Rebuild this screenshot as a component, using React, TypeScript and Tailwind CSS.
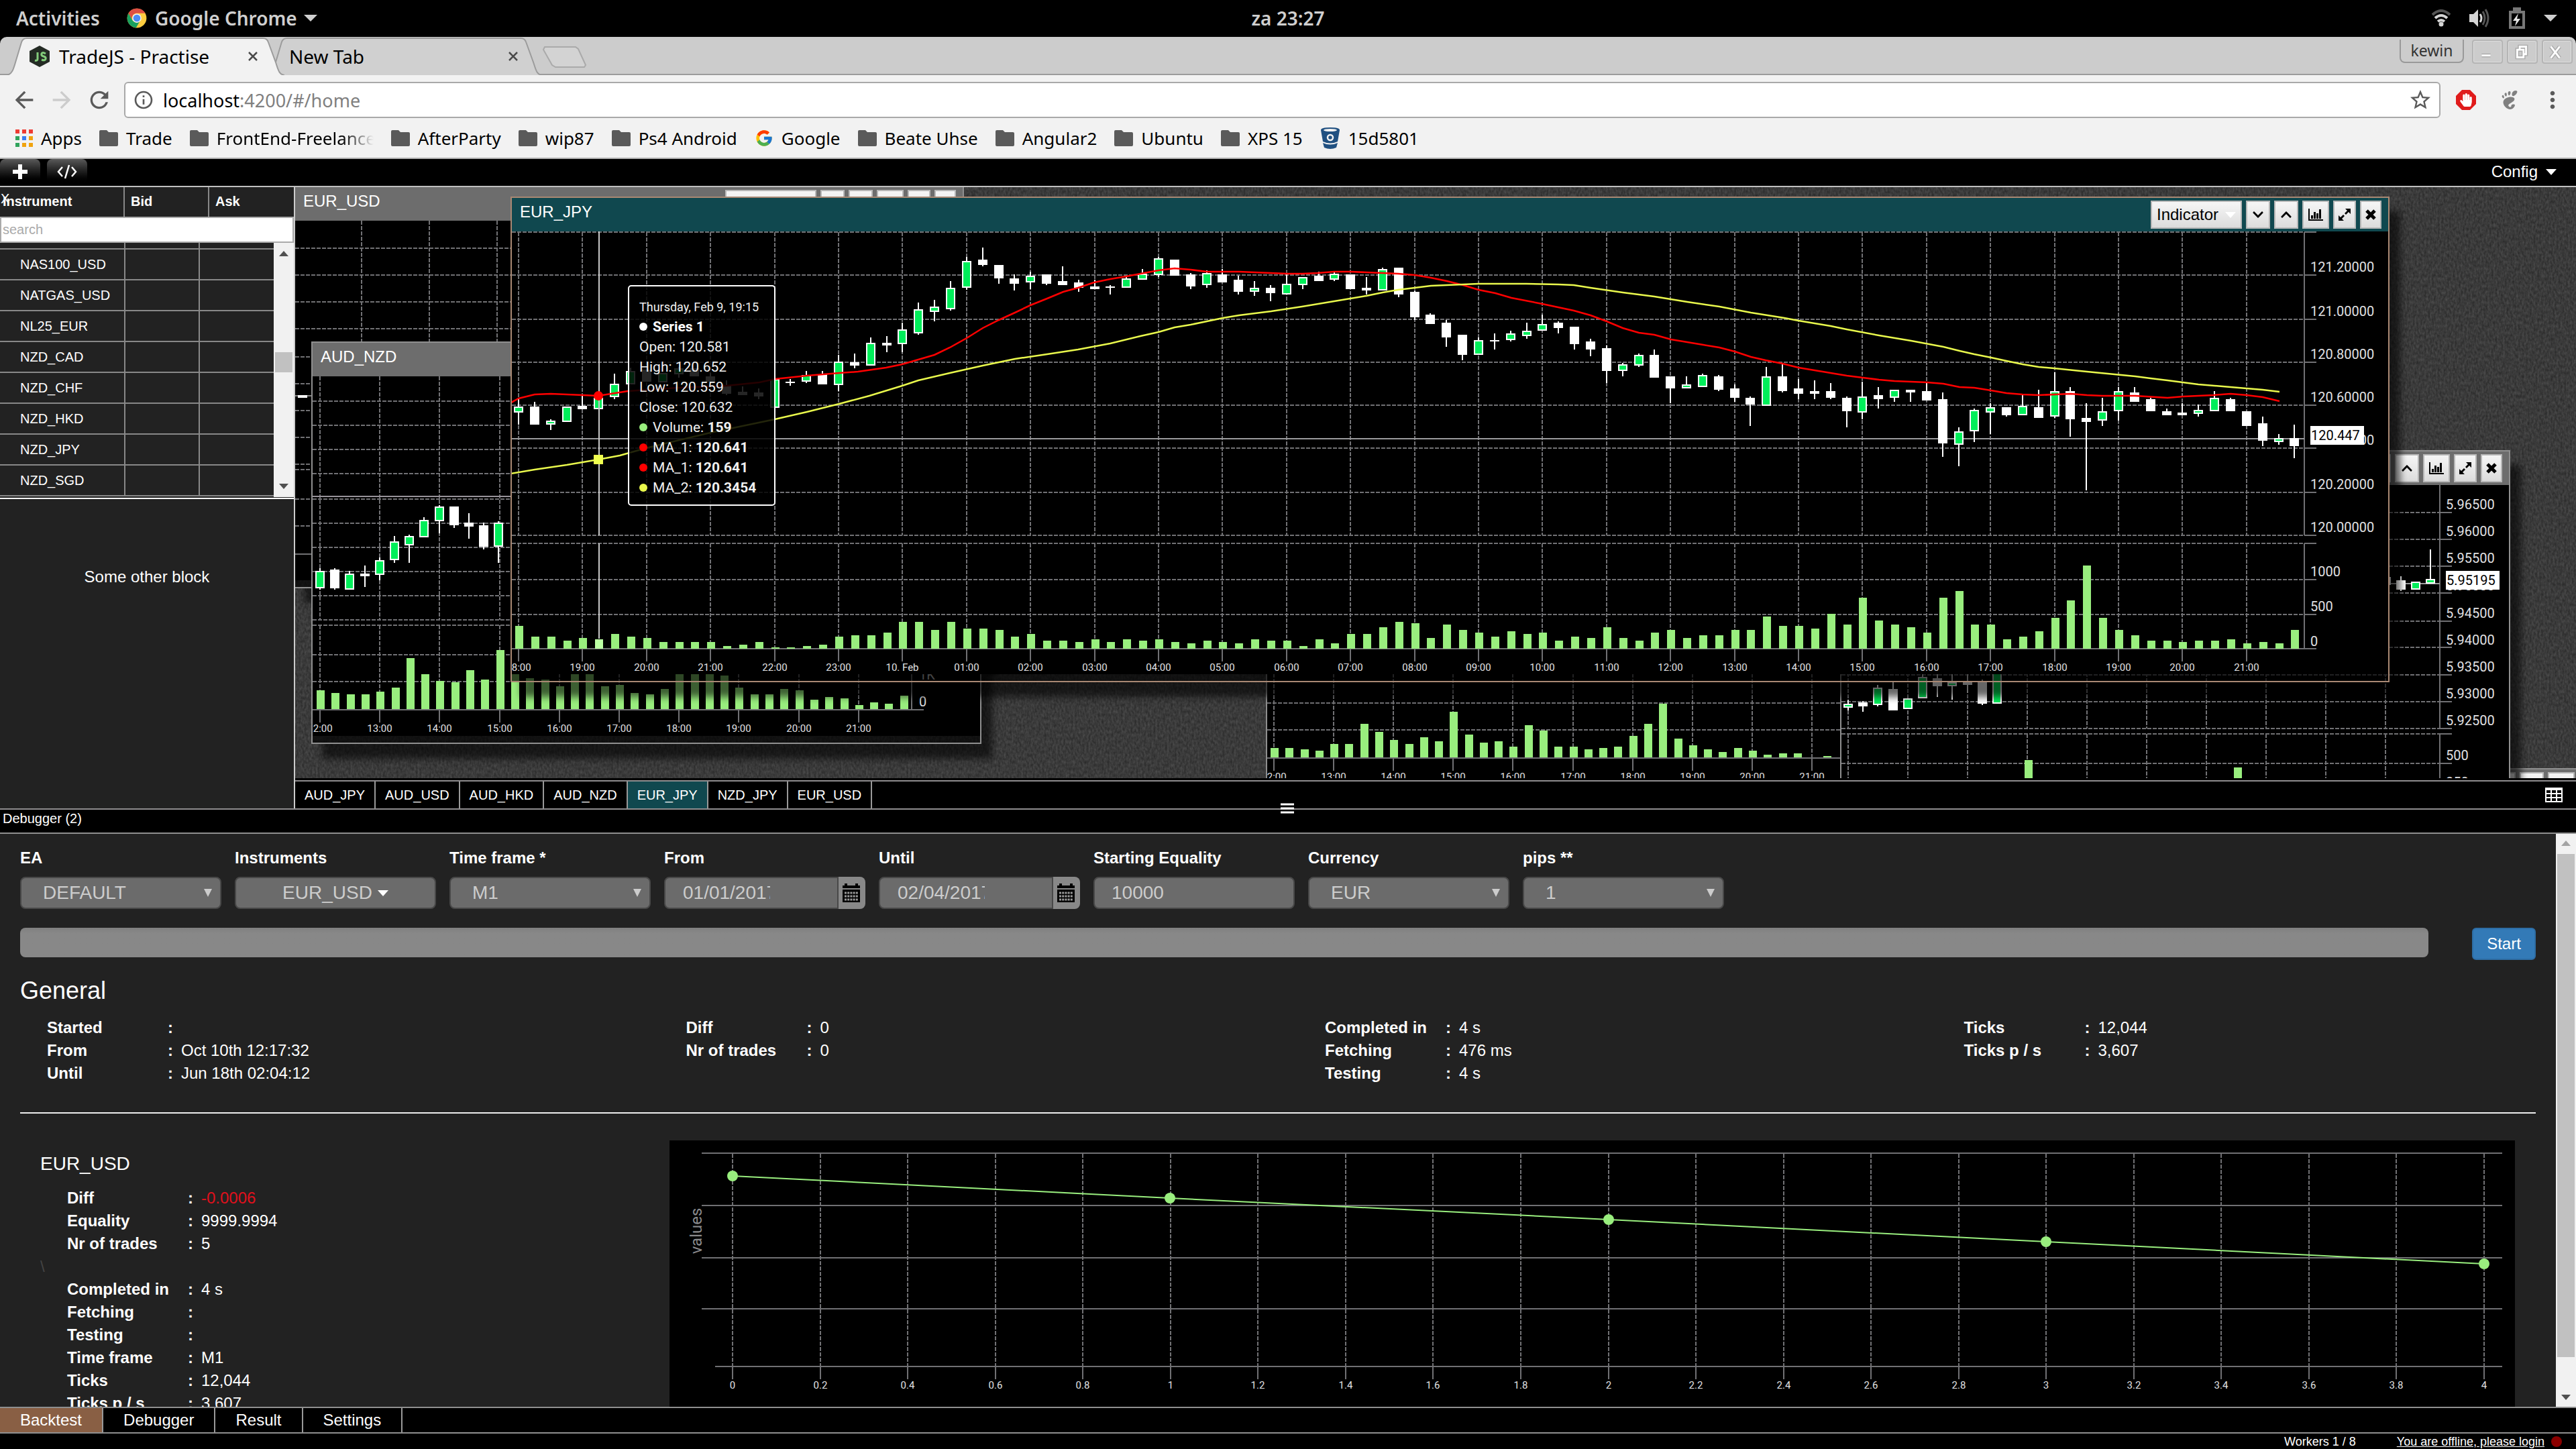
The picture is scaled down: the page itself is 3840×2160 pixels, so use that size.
import React from "react";
import { FcGoogle } from "react-icons/fc";
import { FaHandPaper, FaChevronDown, FaChevronUp, FaCode } from "react-icons/fa";
import { MdArrowBack, MdArrowForward, MdRefresh, MdInfoOutline, MdMoreVert, MdStarBorder } from "react-icons/md";
import { SiGnome } from "react-icons/si";

/* ---------- data ---------- */

// [high, body top, body bottom, low, rising] in chart pixels
type Candle = [number, number, number, number, 0 | 1];
type Point = [number, number];

const eurJpyCandles: Candle[] = [
  [594, 606, 615, 633, 1], [599, 606, 633, 633, 0], [625, 627, 633, 641, 1], [606, 606, 629, 629, 1],
  [589, 605, 610, 610, 0], [593, 593, 610, 610, 1], [557, 572, 592, 595, 1], [548, 553, 573, 573, 1],
  [551, 551, 569, 569, 0], [556, 556, 570, 570, 1], [547, 549, 558, 563, 1], [549, 549, 561, 561, 0],
  [556, 561, 569, 569, 0], [567, 575, 587, 589, 0], [576, 584, 589, 589, 0], [579, 585, 591, 595, 0],
  [565, 565, 608, 608, 1], [565, 569, 571, 575, 0], [553, 559, 569, 571, 1], [553, 558, 573, 573, 0],
  [529, 539, 574, 583, 1], [527, 540, 545, 549, 0], [503, 511, 545, 545, 1], [501, 511, 515, 525, 0],
  [481, 491, 513, 525, 1], [451, 461, 497, 499, 1], [447, 457, 465, 479, 1], [419, 429, 461, 463, 1],
  [383, 389, 429, 432, 1], [369, 387, 395, 397, 0], [395, 395, 415, 423, 0], [409, 415, 423, 433, 0],
  [405, 411, 421, 431, 1], [409, 409, 423, 425, 0], [397, 419, 425, 425, 0], [417, 421, 429, 435, 0],
  [417, 427, 431, 431, 0], [425, 427, 429, 439, 0], [413, 415, 429, 429, 1], [401, 408, 417, 417, 1],
  [383, 385, 410, 413, 1], [387, 387, 411, 411, 0], [407, 409, 427, 431, 0], [403, 407, 425, 429, 1],
  [401, 409, 421, 421, 0], [411, 417, 435, 439, 0], [419, 429, 435, 441, 1], [425, 429, 437, 449, 0],
  [409, 423, 439, 439, 1], [413, 413, 425, 431, 1], [405, 411, 419, 419, 0], [405, 408, 417, 419, 1],
  [409, 409, 431, 431, 0], [413, 429, 433, 439, 0], [399, 401, 433, 433, 1], [399, 399, 439, 443, 0],
  [433, 435, 473, 477, 0], [467, 469, 483, 483, 0], [477, 481, 503, 517, 0], [499, 499, 529, 537, 0],
  [503, 507, 529, 529, 1], [497, 507, 509, 521, 0], [493, 497, 507, 509, 1], [481, 493, 501, 505, 1],
  [469, 483, 493, 493, 1], [479, 481, 489, 497, 0], [487, 487, 513, 521, 0], [505, 509, 521, 531, 0],
  [515, 519, 553, 571, 0], [541, 543, 553, 561, 1], [527, 529, 545, 547, 1], [521, 529, 563, 563, 0],
  [561, 561, 579, 601, 0], [561, 573, 579, 579, 1], [557, 559, 577, 577, 1], [559, 561, 581, 583, 0],
  [573, 579, 593, 599, 0], [591, 593, 603, 635, 0], [547, 561, 605, 605, 1], [543, 561, 583, 585, 0],
  [565, 579, 587, 595, 0], [567, 583, 587, 595, 0], [571, 583, 593, 595, 0], [591, 593, 613, 637, 0],
  [569, 591, 615, 625, 1], [577, 589, 595, 609, 0], [581, 581, 593, 599, 1], [581, 581, 585, 599, 0],
  [571, 583, 597, 597, 0], [585, 595, 661, 681, 0], [637, 643, 663, 695, 1], [609, 611, 643, 659, 1],
  [601, 607, 615, 647, 1], [607, 607, 619, 621, 0], [589, 605, 619, 619, 1], [581, 607, 623, 623, 0],
  [555, 583, 621, 623, 1], [577, 583, 625, 651, 0], [601, 623, 629, 731, 0], [593, 613, 627, 635, 1],
  [577, 583, 613, 627, 1], [577, 585, 599, 599, 0], [593, 595, 613, 613, 0], [609, 613, 619, 619, 0],
  [601, 615, 619, 619, 0], [603, 611, 617, 621, 1], [583, 593, 613, 613, 1], [593, 595, 613, 613, 0],
  [613, 613, 635, 635, 0], [621, 631, 657, 665, 0], [647, 653, 659, 663, 1], [633, 653, 665, 683, 0],
];

const eurJpyVolume = [
  933, 949, 949, 955, 951, 953, 945, 949, 951, 957, 957, 957, 957, 963, 961, 957, 965, 965, 963, 961, 949, 947, 947,
  943, 927, 927, 939, 927, 937, 937, 939, 949, 945, 955, 955, 957, 953, 957, 953, 955, 953, 957, 959, 955, 957, 959,
  953, 955, 955, 963, 953, 959, 945, 945, 935, 927, 929, 951, 931, 939, 943, 949, 941, 945, 943, 955, 949, 951, 935,
  951, 955, 943, 939, 951, 947, 947, 939, 939, 919, 933, 933, 937, 915, 931, 891, 925, 931, 935, 943, 891, 881, 931,
  931, 953, 949, 941, 921, 895, 843, 921, 939, 947, 955, 955, 957, 955, 955, 953, 959, 957, 959, 939,
];

const ma1: Point[] = [
  [762, 600], [773, 594], [797, 588], [821, 587], [845, 588], [869, 589], [892, 590], [917, 586], [936, 583],
  [1010, 578], [1083, 575], [1132, 570], [1155, 565], [1203, 560], [1251, 556], [1279, 554], [1321, 548], [1345, 543],
  [1369, 536], [1393, 529], [1416, 518], [1441, 504], [1465, 489], [1489, 477], [1513, 466], [1536, 455], [1561, 445],
  [1585, 435], [1607, 429], [1631, 421], [1655, 416], [1679, 412], [1700, 408], [1727, 403], [1751, 400], [1775, 402],
  [1799, 405], [1847, 405], [1895, 407], [1919, 408], [1941, 408], [1964, 407], [1989, 405], [2013, 405], [2037, 406],
  [2061, 407], [2084, 408], [2109, 410], [2133, 414], [2157, 419], [2181, 425], [2204, 432], [2229, 437], [2253, 444],
  [2299, 453], [2346, 463], [2371, 470], [2395, 479], [2419, 489], [2443, 496], [2466, 499], [2491, 506], [2515, 510],
  [2539, 514], [2563, 518], [2586, 524], [2610, 532], [2632, 537], [2657, 542], [2681, 548], [2705, 552], [2729, 556],
  [2753, 560], [2777, 563], [2801, 566], [2824, 568], [2873, 570], [2897, 572], [2921, 577], [2943, 578], [2968, 582],
  [2991, 586], [3015, 588], [3039, 589], [3087, 587], [3111, 589], [3134, 590], [3183, 590], [3231, 593], [3255, 591],
  [3277, 590], [3300, 589], [3325, 587], [3349, 589], [3373, 592], [3398, 598],
];

const ma2: Point[] = [
  [762, 706], [797, 700], [845, 693], [892, 685], [924, 679], [963, 668], [1059, 645], [1155, 625], [1203, 614],
  [1251, 602], [1296, 590], [1345, 575], [1369, 567], [1416, 556], [1465, 545], [1513, 535], [1561, 528], [1607, 521],
  [1655, 512], [1700, 501], [1727, 495], [1751, 488], [1775, 484], [1799, 479], [1823, 474], [1847, 470], [1895, 464],
  [1941, 457], [1989, 449], [2037, 441], [2061, 436], [2084, 432], [2109, 429], [2133, 426], [2157, 425], [2204, 423],
  [2275, 423], [2323, 424], [2346, 425], [2371, 429], [2419, 436], [2466, 442], [2515, 450], [2563, 457], [2610, 466],
  [2660, 474], [2681, 478], [2729, 486], [2753, 491], [2801, 500], [2849, 508], [2897, 517], [2921, 523], [2943, 528],
  [2968, 533], [2991, 538], [3015, 543], [3039, 547], [3062, 549], [3111, 554], [3183, 561], [3206, 564], [3231, 567],
  [3277, 573], [3325, 577], [3349, 579], [3373, 581], [3398, 584],
];

const audNzdCandles: Candle[] = [
  [847, 851, 877, 879, 1], [847, 849, 877, 879, 0], [851, 855, 879, 879, 1], [843, 855, 859, 875, 0],
  [831, 835, 857, 865, 1], [799, 807, 835, 839, 1], [797, 799, 813, 839, 1], [771, 775, 801, 801, 1],
  [753, 755, 777, 795, 1], [755, 755, 783, 787, 0], [765, 779, 785, 803, 0], [779, 783, 815, 819, 0],
  [777, 779, 815, 839, 1],
];

const audNzdVolume = [
  1029, 1033, 1035, 1035, 1031, 1025, 981, 1005, 1015, 1017, 999, 1013, 969, 990, 1011, 1013, 1023, 995, 1000, 1023,
  1021, 1033, 1035, 1027, 1000, 985, 990, 1007, 1025, 1035, 1035, 1027, 1029, 1043, 1039, 1041, 1051, 1047, 1049, 1037,
];

const nzdJpyVolume = [
  1115, 1115, 1117, 1119, 1109, 1109, 1079, 1091, 1103, 1109, 1099, 1105, 1061, 1095, 1107, 1105, 1113, 1081, 1089,
  1113, 1113, 1117, 1115, 1113, 1097, 1079, 1049, 1101, 1111, 1117, 1121, 1115, 1119, 1125, 1123, 1123, 1129, 1127,
];

const audHkdCandles: Candle[] = [
  [1043, 1049, 1055, 1059, 1], [1045, 1047, 1053, 1061, 0], [1021, 1025, 1051, 1053, 1], [1017, 1027, 1059, 1059, 0],
  [1041, 1041, 1057, 1057, 1], [1003, 1009, 1041, 1041, 1], [1003, 1011, 1023, 1039, 0], [1003, 1017, 1023, 1043, 1],
  [1003, 1015, 1021, 1033, 0], [1013, 1016, 1049, 1051, 0], [985, 990, 1049, 1049, 1],
];

const hours = (from: number, count: number) =>
  Array.from({ length: count }, (_, i) => `${String((from + i) % 24).padStart(2, "0")}:00`);

/* ---------- chart parts ---------- */

const GRID = "#707073";
const LIME = "#99ee7e";

function Candles({ data, x0, step }: { data: Candle[]; x0: number; step: number }) {
  return (
    <g shapeRendering="crispEdges">
      {data.map(([hi, top, bottom, lo, up], i) => {
        const x = Math.round(x0 + i * step);
        return (
          <g key={i}>
            <rect x={x - 1} y={hi} width={2} height={lo - hi} fill="#fff" />
            <rect x={x - 7} y={top} width={14} height={Math.max(2, bottom - top)} fill="#fff" />
            {up === 1 && <rect x={x - 5} y={top + 2} width={10} height={Math.max(2, bottom - top - 4)} fill="#00ee5a" />}
          </g>
        );
      })}
    </g>
  );
}

function Volume({ tops, base, x0, step, highlight }: { tops: number[]; base: number; x0: number; step: number; highlight?: number }) {
  return (
    <g shapeRendering="crispEdges">
      {tops.map((y, i) => (
        <rect key={i} x={Math.round(x0 + i * step) - 5} y={y} width={12} height={base - y} fill={i === highlight ? "#bcffa4" : LIME} />
      ))}
    </g>
  );
}

type GridProps = {
  left: number;
  top: number;
  axis: number;
  rows: number[];
  priceBottom: number;
  volTop: number;
  base: number;
  x0: number;
  step: number;
  labels: string[];
  columns?: number;
};

function Grid({ left, top, axis, rows, priceBottom, volTop, base, x0, step, labels, columns }: GridProps) {
  const xs = Array.from({ length: columns ?? labels.length }, (_, i) => Math.round(x0 + i * step));
  return (
    <g stroke={GRID} strokeWidth={2} shapeRendering="crispEdges">
      {rows.map((y) => (
        <React.Fragment key={y}>
          <line x1={left} x2={axis} y1={y} y2={y} strokeDasharray="6 2" />
          <line x1={axis} x2={axis + 18} y1={y} y2={y} />
        </React.Fragment>
      ))}
      {xs.map((x) => (
        <g key={x}>
          <line x1={x} x2={x} y1={top} y2={priceBottom} strokeDasharray="6 2" />
          <line x1={x} x2={x} y1={volTop} y2={base} strokeDasharray="6 2" />
          <line x1={x} x2={x} y1={base} y2={base + 19} />
        </g>
      ))}
      <line x1={axis} x2={axis} y1={top} y2={priceBottom} />
      <line x1={axis} x2={axis} y1={volTop} y2={base} />
      <line x1={left} x2={axis + 18} y1={base} y2={base} />
      <g stroke="none" fill="#e0e0e3" fontSize={15} textAnchor="middle" shapeRendering="auto">
        {labels.map((t, i) => (
          <text key={t + i} x={xs[i]} y={base + 33}>
            {t}
          </text>
        ))}
      </g>
    </g>
  );
}

function AxisText({ x, items }: { x: number; items: [string, number][] }) {
  return (
    <g fill="#e0e0e3" fontSize={20}>
      {items.map(([t, y]) => (
        <text key={t} x={x} y={y + 7}>
          {t}
        </text>
      ))}
    </g>
  );
}

function PriceFlag({ x, y, text }: { x: number; y: number; text: string }) {
  return (
    <g>
      <rect x={x} y={y - 14} width={80} height={28} fill="#fff" />
      <text x={x + 1} y={y + 7} fontSize={20} fill="#000">
        {text}
      </text>
    </g>
  );
}

const poly = (pts: Point[]) => pts.map((p) => p.join(",")).join(" ");

function EurJpyChart() {
  return (
    <svg className="block font-[Roboto,sans-serif]" width={2797} height={660} viewBox="763 345 2797 660">
      <Grid
        left={763} top={346} axis={3435} rows={[346, 410, 476, 540, 604, 668, 734, 798, 810, 864, 916]}
        priceBottom={798} volTop={810} base={967} x0={773} step={95.4}
        labels={[...hours(18, 6), "10. Feb", ...hours(1, 21)]}
      />
      <line x1={763} x2={3435} y1={654} y2={654} stroke="#9a9a9c" strokeWidth={2} />
      <Volume tops={eurJpyVolume} base={967} x0={773} step={23.85} highlight={5} />
      <Candles data={eurJpyCandles} x0={773} step={23.85} />
      <polyline points={poly(ma1)} fill="none" stroke="#f00" strokeWidth={2.5} />
      <polyline points={poly(ma2)} fill="none" stroke="#e9f84c" strokeWidth={2.5} />
      <path d="M893 345V798M893 810V952" stroke="#c8c8c8" strokeWidth={2} />
      <circle cx={892} cy={590} r={7} fill="#f00" />
      <rect x={885} y={678} width={14} height={14} fill="#f0ff50" />
      <AxisText
        x={3444}
        items={[
          ["121.20000", 398], ["121.00000", 464], ["120.80000", 528], ["120.60000", 592], ["120.40000", 656],
          ["120.20000", 722], ["120.00000", 786], ["1000", 852], ["500", 904], ["0", 956],
        ]}
      />
      <PriceFlag x={3444} y={649} text="120.447" />
    </svg>
  );
}

function AudNzdChart() {
  return (
    <svg className="block font-[Roboto,sans-serif]" width={995} height={536} viewBox="466 561 995 536">
      <Grid
        left={466} top={561} axis={1359} rows={[598, 634, 670, 706, 744, 780, 816, 852, 888, 924, 932, 976, 1016]}
        priceBottom={924} volTop={932} base={1058} x0={477} step={89.2} labels={hours(12, 10)}
      />
      <line x1={466} x2={1359} y1={740} y2={740} stroke="#98939a" strokeWidth={2} />
      <Volume tops={audNzdVolume} base={1057} x0={477} step={22.3} />
      <Candles data={audNzdCandles} x0={477} step={22.2} />
      <AxisText x={1370} items={[["1K", 1006], ["0", 1046]]} />
    </svg>
  );
}

function EurUsdChart() {
  return (
    <svg className="block font-[Roboto,sans-serif]" width={995} height={536} viewBox="440 329 995 536">
      <Grid
        left={440} top={329} axis={1333} rows={[370, 410, 450, 490, 532, 572, 612, 652, 692, 700, 744, 784]}
        priceBottom={692} volTop={700} base={826} x0={539} step={101} labels={hours(13, 8)}
      />
      <path d="M440 590h25" stroke="#fff" strokeWidth={1} />
      <rect x={444} y={589} width={14} height={4} fill="#fff" />
    </svg>
  );
}

function NzdJpyChart() {
  return (
    <svg className="block font-[Roboto,sans-serif]" width={995} height={536} viewBox="1889 633 995 536">
      <Grid
        left={1889} top={633} axis={2782} rows={[996, 1004, 1048, 1088]} priceBottom={996} volTop={1004} base={1130}
        x0={1899} step={89.1} labels={hours(12, 10)}
      />
      <Volume tops={nzdJpyVolume} base={1129} x0={1899} step={22.28} />
    </svg>
  );
}

function AudHkdChart() {
  return (
    <svg className="block font-[Roboto,sans-serif]" width={995} height={536} viewBox="2745 723 995 536">
      <Grid
        left={2745} top={723} axis={3637} rows={[764, 804, 844, 884, 926, 965, 1006, 1046, 1086, 1094, 1138]}
        priceBottom={1086} volTop={1094} base={1220} x0={2755} step={89} labels={hours(12, 10)}
      />
      <path d="M2745 870H3637" stroke="#9a9a9c" strokeWidth={2} />
      <Candles data={audHkdCandles} x0={2755} step={22.2} />
      <Candles data={[[853, 860, 872, 876, 0], [859, 865, 879, 881, 0], [867, 867, 879, 879, 1], [819, 863, 870, 870, 1]]} x0={3557} step={22} />
      <rect x={3018} y={1133} width={12} height={87} fill={LIME} />
      <rect x={3330} y={1144} width={12} height={76} fill={LIME} />
      <AxisText
        x={3646}
        items={[
          ["5.96500", 752], ["5.96000", 792], ["5.95500", 832], ["5.95000", 873], ["5.94500", 914], ["5.94000", 954],
          ["5.93500", 994], ["5.93000", 1034], ["5.92500", 1074], ["500", 1126], ["250", 1166],
        ]}
      />
      <PriceFlag x={3646} y={865} text="5.95195" />
    </svg>
  );
}

function EqualityChart() {
  const xs = Array.from({ length: 21 }, (_, i) => Math.round(1092 + i * 130.55));
  const pts: Point[] = [[1092, 1753], [1744, 1786], [2398, 1818], [3050, 1851], [3703, 1884]];
  return (
    <svg className="block w-full bg-black font-[Roboto,sans-serif]" viewBox="998 1700 2751 420" preserveAspectRatio="xMinYMin meet">
      <g stroke={GRID} strokeWidth={2} shapeRendering="crispEdges">
        {[1719, 1797, 1875, 1951].map((y) => (
          <line key={y} x1={1046} x2={3730} y1={y} y2={y} />
        ))}
        <line x1={1066} x2={3730} y1={2037} y2={2037} />
        {xs.map((x) => (
          <g key={x}>
            <line x1={x} x2={x} y1={1720} y2={2037} strokeDasharray="6 2" />
            <line x1={x} x2={x} y1={2037} y2={2056} />
          </g>
        ))}
      </g>
      <g fill="#e0e0e3" fontSize={15} textAnchor="middle">
        {xs.map((x, i) => (
          <text key={x} x={x} y={2070}>
            {Number((i * 0.2).toFixed(1))}
          </text>
        ))}
      </g>
      <text x={1038} y={1835} transform="rotate(-90 1038 1835)" textAnchor="middle" dominantBaseline="central" fontSize={24} fill="#8a8a8d">
        values
      </text>
      <polyline points={poly(pts)} fill="none" stroke={LIME} strokeWidth={2} />
      {pts.map(([x, y]) => (
        <circle key={x} cx={x} cy={y} r={8} fill={LIME} />
      ))}
    </svg>
  );
}

/* ---------- icons ---------- */

const ChartIcon = () => (
  <svg width="22" height="18" viewBox="0 0 22 18" fill="currentColor">
    <path d="M0 0h2v16h20v2H0zM4 10h3v5H4zM8 5h3v10H8zM12 7h3v8h-3zM16 1h3v14h-3z" />
  </svg>
);
const ExpandIcon = () => (
  <svg width="18" height="18" viewBox="0 0 18 18" fill="currentColor">
    <path d="M10 0h8v8l-3-3-4 4-2-2 4-4zM8 18H0v-8l3 3 4-4 2 2-4 4z" />
  </svg>
);
const CrossIcon = () => (
  <svg width="16" height="16" viewBox="0 0 16 16" stroke="currentColor" strokeWidth="5">
    <path d="M2 2l12 12M14 2L2 14" />
  </svg>
);
const Caret = ({ className }: { className?: string }) => (
  <svg className={className} width="16" height="9" viewBox="0 0 16 9" fill="currentColor">
    <path d="M0 0h16L8 9z" />
  </svg>
);
const MenuCaret = ({ className }: { className?: string }) => (
  <svg className={className} width="20" height="10" viewBox="0 0 20 10" fill="currentColor">
    <path d="M0 0h20L10 10z" />
  </svg>
);
const Folder = () => (
  <svg width="28" height="24" viewBox="0 0 28 24" fill="#5a5a5a">
    <path d="M2 0h9l3 3h12a2 2 0 012 2v17a2 2 0 01-2 2H2a2 2 0 01-2-2V2a2 2 0 012-2z" />
  </svg>
);
const ChromeLogo = () => (
  <svg width="30" height="30" viewBox="0 0 48 48">
    <circle cx="24" cy="24" r="23" fill="#ffcd40" />
    <path d="M24 1A23 23 0 004 12.6L14 30a11.500 11.500 0 0110-17.500h20A23 23 0 0024 1z" fill="#dd4f43" />
    <path d="M4 12.600A23 23 0 0022 47l10-17a11.500 11.500 0 01-18 0z" fill="#1aa15f" />
    <circle cx="24" cy="24" r="11" fill="#f1f1f1" />
    <circle cx="24" cy="24" r="8.500" fill="#4c8bf5" />
  </svg>
);
const NodeLogo = () => (
  <svg width="30" height="32" viewBox="0 0 30 32">
    <path d="M15 0l15 8v16l-15 8L0 24V8z" fill="#242b24" />
    <path d="M12 10v10q0 3-4 2M24 12q-5-3-6 0t3 4 3 4-6 1" fill="none" stroke="#83cd7b" strokeWidth="3" />
  </svg>
);
const Bucket = () => (
  <svg width="30" height="32" viewBox="0 0 30 32">
    <path d="M1 4q0-4 14-4t14 4l-3 17q-11 5-22 0zM4 23q11 5 22 0l-2 7q-9 4-18 0z" fill="#205081" />
    <ellipse cx="15" cy="4" rx="10" ry="2" fill="#f2f2f2" />
    <circle cx="15" cy="15" r="4" fill="none" stroke="#f2f2f2" strokeWidth="2.500" />
  </svg>
);
const AppsGrid = () => (
  <svg width="26" height="26" viewBox="0 0 26 26">
    {["#ee3b33", "#ee3b33", "#ee3b33", "#2fa35b", "#3b7df0", "#f0a30e", "#2fa35b", "#f0a30e", "#f0a30e"].map((c, i) => (
      <rect key={i} x={(i % 3) * 10} y={Math.floor(i / 3) * 10} width="6" height="6" fill={c} />
    ))}
  </svg>
);
const CalendarIcon = () => (
  <svg width="26" height="28" viewBox="0 0 26 28">
    <path d="M0 3h3V0h4v3h12V0h4v3h3v4H0zM0 9h26v19H0z" fill="#000" />
    <path d="M3 14h20M3 19h20M3 24h20" stroke="#999" strokeWidth="3" strokeDasharray="3 1.200" />
  </svg>
);

/* ---------- browser chrome ---------- */

function BrowserTab({ title, active, icon }: { title: string; active?: boolean; icon?: React.ReactNode }) {
  return (
    <div className={active ? "relative z-10 flex h-full w-[414px] items-center pl-[34px] pr-[40px]" : "relative -ml-[26px] flex h-full w-[410px] items-center pl-[33px] pr-[36px]"}>
      <svg className="absolute inset-0 h-full w-full" viewBox="0 0 414 57" preserveAspectRatio="none">
        <path d="M0 57C8 56 10 48 13 38L22 8Q24 2 30 2H382Q388 2 390 8L401 38C405 50 406 56 414 57" fill={active ? "#f2f2f2" : "#d0d0d0"} stroke="#9b9b9b" strokeWidth="2" />
      </svg>
      <div className="relative flex flex-1 items-center gap-[14px]">
        {icon}
        <span className="flex-1 text-[28px] text-black">{title}</span>
        <button aria-label={`Close ${title}`} className="text-[#4a4a4a]">
          <svg width="14" height="14" viewBox="0 0 14 14" stroke="currentColor" strokeWidth="2.500">
            <path d="M1 1l12 12M13 1L1 13" />
          </svg>
        </button>
      </div>
    </div>
  );
}

const bookmarks: [string, React.ReactNode][] = [
  ["Trade", <Folder />],
  ["FrontEnd-Freelance", <Folder />],
  ["AfterParty", <Folder />],
  ["wip87", <Folder />],
  ["Ps4 Android", <Folder />],
  ["Google", <FcGoogle size={28} />],
  ["Beate Uhse", <Folder />],
  ["Angular2", <Folder />],
  ["Ubuntu", <Folder />],
  ["XPS 15", <Folder />],
  ["15d5801", <Bucket />],
];

function Browser() {
  return (
    <header className="shrink-0 font-['Noto_Sans',sans-serif] text-[26px] leading-none">
      <div className="grid h-[55px] grid-cols-[1fr_auto_1fr] items-center bg-black pb-[2px] text-[28px] font-semibold text-[#cfcfcf]">
        <div className="flex items-center pl-6">
          <span>Activities</span>
          <span className="ml-10 mr-3"><ChromeLogo /></span>
          <span>Google Chrome</span>
          <MenuCaret className="ml-[10px]" />
        </div>
        <time>za 23:27</time>
        <div className="flex items-center justify-end gap-[28px] pr-[28px]">
          <svg width="28" height="26" viewBox="0 0 28 26" fill="none" strokeWidth="4">
            <path d="M1 8q13-12 26 0" stroke="#555" />
            <path d="M5 13q9-8 18 0M9 18q5-4 10 0" stroke="#d5d5d5" />
            <circle cx="14" cy="22" r="3.500" fill="#d5d5d5" />
          </svg>
          <svg width="31" height="28" viewBox="0 0 31 28" fill="none">
            <path d="M0 8h6l7-7v26l-7-7H0z" fill="#d5d5d5" />
            <path d="M16 8q4 6 0 12" stroke="#d5d5d5" strokeWidth="3" />
            <path d="M20 4q6 10 0 20M24 1q8 13 0 26" stroke="#555" strokeWidth="3" />
          </svg>
          <svg width="24" height="32" viewBox="0 0 24 32">
            <path d="M6 0h12v5h6v27H0V5h6z" fill="#777" />
            <path d="M4 9h16v19H4z" fill="#000" />
            <path d="M14 9l-8 11h5l-2 8 8-11h-5z" fill="#e5e5e5" />
          </svg>
          <MenuCaret />
        </div>
      </div>

      <div className="bg-black">
        <div className="flex h-[57px] rounded-t-[10px] bg-[#ccc] pl-[10px] shadow-[inset_0_-2px_0_#9b9b9b]">
          <BrowserTab title="TradeJS - Practise" active icon={<NodeLogo />} />
          <BrowserTab title="New Tab" />
          <svg className="mt-[13px]" width="68" height="34" viewBox="0 0 68 34">
            <path d="M4 2h46l4 3 11 24-2 3H20l-5-3L2 6z" fill="#d3d3d3" stroke="#aaa" strokeWidth="2" />
          </svg>
          <div className="ml-auto flex items-start gap-[6px] pr-[5px] pt-[4px] text-white">
            <div className="mr-[6px] flex h-[35px] w-[96px] items-center justify-center rounded-b-[8px] border-2 border-t-0 border-[#999] text-[23px] text-[#333]">kewin</div>
            {["M12 23h14", "M13 14h10v12h-10zM17 14v-5h10v12h-4", "M11 9l14 18M25 9l-14 18"].map((d) => (
              <button key={d} aria-label="window control" className="h-[36px] w-[46px] rounded-[4px] border-2 border-[#b5b5b5] shadow-[inset_0_0_0_1px_#ddd]">
                <svg width="38" height="32" viewBox="0 0 38 34" fill="none">
                  <path d={d} stroke="#aaa" strokeWidth="6" />
                  <path d={d} stroke="#fff" strokeWidth="3" />
                </svg>
              </button>
            ))}
          </div>
        </div>
      </div>

      <div className="border-b-2 border-[#b0b0b0] bg-[#f2f2f2]">
        <div className="flex items-center pt-[10px] text-[#5a5a5a]">
          <button aria-label="Back" className="ml-[16px]"><MdArrowBack size={40} /></button>
          <button aria-label="Forward" className="ml-[16px] text-[#ccc]"><MdArrowForward size={40} /></button>
          <button aria-label="Reload" className="ml-[16px]"><MdRefresh size={40} /></button>
          <label className="ml-[17px] flex h-[54px] flex-1 items-center rounded-[6px] border-2 border-[#a9a9a9] bg-white pl-[11px] pr-[10px]">
            <MdInfoOutline size={32} />
            <span className="ml-[13px] flex-1 text-[27px] text-[#808080]"><span className="text-black">localhost</span>:4200/#/home</span>
            <MdStarBorder size={36} />
          </label>
          <span className="relative ml-[23px] flex h-[30px] w-[30px] items-center justify-center">
            <svg className="absolute inset-0" viewBox="0 0 30 30"><path d="M9 0h12l9 9v12l-9 9H9l-9-9V9z" fill="#e01b1b" /></svg>
            <FaHandPaper className="relative text-white" size={20} />
          </span>
          <SiGnome className="ml-[36px] text-[#808080]" size={28} />
          <button aria-label="Menu" className="ml-[30px] mr-[15px]"><MdMoreVert size={40} /></button>
        </div>
        <nav className="flex h-[59px] items-center gap-[26px] pl-[23px] text-black">
          <a href="#apps" className="flex items-center gap-[12px]"><AppsGrid />Apps</a>
          {bookmarks.map(([name, icon]) => (
            <a key={name} href="#bookmark" className="flex items-center gap-[12px]">
              {icon}
              {name === "FrontEnd-Freelance" ? (
                <span className="w-[234px] overflow-hidden whitespace-nowrap leading-[36px] [mask-image:linear-gradient(to_right,black_80%,transparent)]">{name}</span>
              ) : (
                <span className="leading-[36px]">{name}</span>
              )}
            </a>
          ))}
        </nav>
      </div>
    </header>
  );
}

/* ---------- sidebar ---------- */

const instruments = ["", "NAS100_USD", "NATGAS_USD", "NL25_EUR", "NZD_CAD", "NZD_CHF", "NZD_HKD", "NZD_JPY", "NZD_SGD"];

const ArrowUp = ({ color = "#505050" }: { color?: string }) => <svg width="14" height="8" viewBox="0 0 14 8" fill={color}><path d="M7 0l7 8H0z" /></svg>;
const ArrowDown = () => <svg width="14" height="8" viewBox="0 0 14 8" fill="#505050"><path d="M0 0h14L7 8z" /></svg>;

function Sidebar() {
  return (
    <aside className="flex w-[440px] shrink-0 flex-col border-r-2 border-[#ccc] bg-[#222] text-[20px]">
      <div className="relative grid h-[44px] grid-cols-[186px_126px_1fr] items-stretch font-bold leading-[42px]">
        <span className="border-r-2 border-[#888] pl-[4px]">Instrument</span>
        <span className="border-r-2 border-[#888] pl-[9px]">Bid</span>
        <span className="pl-[9px]">Ask</span>
        <button aria-label="Close panel" className="absolute left-px top-[5px] font-normal leading-[24px]">X</button>
      </div>
      <input aria-label="search" placeholder="search" className="h-[39px] w-full border-2 border-[#aaa] bg-white pl-[2px] text-black placeholder-[#aaa] outline-none" />
      <div className="flex h-[379px] overflow-hidden">
        <div className="min-w-0 flex-1 overflow-hidden">
          <table className="-mt-[37px] w-full table-fixed border-collapse">
            <colgroup><col className="w-[186px]" /><col className="w-[111px]" /><col /></colgroup>
            <tbody>
              {instruments.map((name) => (
                <tr key={name} className="h-[46px] border-b-2 border-[#888]">
                  <td className="border-r-2 border-[#888] pl-[30px]">{name}</td>
                  <td className="border-r-2 border-[#888]" />
                  <td />
                </tr>
              ))}
            </tbody>
          </table>
        </div>
        <div className="flex w-[30px] flex-col items-center bg-[#f1f1f1] py-[12px]">
          <ArrowUp />
          <div className="mt-[143px] h-[30px] w-[26px] bg-[#c1c1c1]" />
          <div className="mt-auto"><ArrowDown /></div>
        </div>
      </div>
      <div className="mt-px border-t-2 border-white pt-[99px] text-center text-[24px] leading-[34px]">Some other block</div>
    </aside>
  );
}

/* ---------- workspace ---------- */

const winBtn = "flex h-[42px] items-center justify-center border-2 border-[#b8b8b8] bg-linear-to-b from-[#f6f6f6] to-[#dcdcdc] text-black";

function ChartWindow({ title, active, className, children }: { title: string; active?: boolean; className: string; children?: React.ReactNode }) {
  return (
    <section className={`absolute border-2 shadow-[16px_22px_10px_rgba(0,0,0,0.6)] ${active ? "border-[#a98873]" : "border-[#8f8f8f]"} ${className}`}>
      <div className={`flex h-[50px] items-start pl-[12px] pr-[10px] pt-[4px] ${active ? "bg-[#10484f]" : "bg-[#6d6d6d]"}`}>
        <h2 className="flex-1 text-[24px] leading-[34px]">{title}</h2>
        <div className="flex gap-[6px]">
          <button className={`${winBtn} w-[136px] gap-[10px] text-[24px]`}>Indicator <Caret className="shrink-0 text-white" /></button>
          <button aria-label="Down" className={`${winBtn} w-[36px]`}><FaChevronDown size={18} /></button>
          <button aria-label="Up" className={`${winBtn} w-[36px]`}><FaChevronUp size={18} /></button>
          <button aria-label="Chart type" className={`${winBtn} w-[40px]`}><ChartIcon /></button>
          <button aria-label="Expand" className={`${winBtn} w-[34px]`}><ExpandIcon /></button>
          <button aria-label="Close" className={`${winBtn} w-[32px]`}><CrossIcon /></button>
        </div>
      </div>
      <div className="relative bg-black">{children}</div>
      <div className="h-[10px] bg-black/70" />
    </section>
  );
}

function Tooltip() {
  const bullets: [string, string, string][] = [
    ["text-[#99ee7e]", "Volume:", "159"],
    ["text-[#f00]", "MA_1:", "120.641"],
    ["text-[#f00]", "MA_1:", "120.641"],
    ["text-[#e9f84c]", "MA_2:", "120.3454"],
  ];
  const dot = <svg className="mr-[8px]" width="12" height="12" viewBox="0 0 12 12" fill="currentColor"><circle cx="6" cy="6" r="6" /></svg>;
  return (
    <div className="absolute left-[173px] top-[80px] w-[220px] rounded-[5px] border-2 border-white bg-black/85 pb-[10px] pl-[15px] pt-[17px] font-[Roboto,sans-serif] text-[21px] leading-[30px] text-[#f0f0f0]">
      <div className="whitespace-nowrap text-[18px] leading-[28px]">Thursday, Feb 9, 19:15</div>
      <div className="flex items-center font-bold text-white">{dot}Series 1</div>
      <div>Open: 120.581</div>
      <div>High: 120.652</div>
      <div>Low: 120.559</div>
      <div>Close: 120.632</div>
      {bullets.map(([color, name, value], i) => (
        <div key={i} className="flex items-center">
          <span className={color}>{dot}</span>
          <span>{name} <b>{value}</b></span>
        </div>
      ))}
    </div>
  );
}

function Workspace() {
  const tabs = ["AUD_JPY", "AUD_USD", "AUD_HKD", "AUD_NZD", "EUR_JPY", "NZD_JPY", "EUR_USD"];
  return (
    <main className="flex min-w-0 flex-1 flex-col">
      <div className="relative min-h-0 flex-1 overflow-hidden bg-[#3b3b3b]">
        <svg className="absolute inset-0 h-full w-full">
          <filter id="fabric" colorInterpolationFilters="sRGB">
            <feTurbulence type="fractalNoise" baseFrequency="0.35 0.2" numOctaves="2" seed="3" />
            <feColorMatrix values="0.18 0 0 0 0.14  0.18 0 0 0 0.14  0.18 0 0 0 0.14  0 0 0 0 1" />
          </filter>
          <rect width="100%" height="100%" filter="url(#fabric)" />
        </svg>
        <ChartWindow title="EUR_USD" className="-left-[2px] -top-[2px] w-[999px]"><EurUsdChart /></ChartWindow>
        <ChartWindow title="AUD_NZD" className="left-[24px] top-[230px] w-[999px]"><AudNzdChart /></ChartWindow>
        <ChartWindow title="NZD_JPY" className="left-[1447px] top-[302px] w-[999px]"><NzdJpyChart /></ChartWindow>
        <ChartWindow title="AUD_JPY" className="left-[2489px] top-[866px] w-[999px]" />
        <ChartWindow title="AUD_HKD" className="left-[2303px] top-[392px] w-[999px]"><AudHkdChart /></ChartWindow>
        <ChartWindow title="EUR_JPY" active className="left-[321px] top-[14px] w-[2801px]">
          <EurJpyChart />
          <Tooltip />
        </ChartWindow>
      </div>
      <div className="mt-[3px] flex h-[42px] items-stretch border-t-2 border-[#8f8d8f] bg-black text-[20px]">
        {tabs.map((t) => (
          <button key={t} className={t === "EUR_JPY" ? "border-r-2 border-[#999] bg-[#10484f] px-[14px]" : "border-r-2 border-[#999] px-[14px]"}>{t}</button>
        ))}
        <button aria-label="Tile windows" className="ml-auto mr-[20px]">
          <svg width="26" height="22" viewBox="0 0 26 22" fill="none" stroke="#fff" strokeWidth="2">
            <path d="M1 1h24v20H1zM1 3h24M1 9h24M1 15h24M9 3v18M17 3v18" />
          </svg>
        </button>
      </div>
    </main>
  );
}

/* ---------- debugger ---------- */

const field = "h-[48px] w-full rounded-[8px] border-2 border-[#484848] bg-[#6b6b6b] text-[28px] text-[#ccc] outline-none";

function Field({ label, id, children }: { label: string; id: string; children: React.ReactNode }) {
  return (
    <div className="w-[300px]">
      <label htmlFor={id} className="mb-[11px] block font-bold leading-[34px]">{label}</label>
      {children}
    </div>
  );
}

function SelectField({ label, id, value }: { label: string; id: string; value: string }) {
  return (
    <Field label={label} id={id}>
      <div className="relative">
        <select id={id} className={`${field} appearance-none pl-[32px]`} defaultValue={value}>
          <option>{value}</option>
        </select>
        <svg className="pointer-events-none absolute right-[14px] top-[18px]" width="12" height="12" viewBox="0 0 12 12" fill="#ccc"><path d="M0 0h12L6 12z" /></svg>
      </div>
    </Field>
  );
}

function DateField({ label, id, value }: { label: string; id: string; value: string }) {
  return (
    <Field label={label} id={id}>
      <div className="flex">
        <input id={id} type="text" defaultValue={value} className="h-[48px] min-w-0 flex-1 rounded-l-[8px] border-2 border-[#484848] bg-[#6b6b6b] pl-[26px] pr-[100px] text-[28px] text-[#ccc] outline-none" />
        <button aria-label={`Pick ${label} date`} className="flex h-[48px] w-[40px] items-center justify-center rounded-r-[8px] bg-[#888] pr-[2px]"><CalendarIcon /></button>
      </div>
    </Field>
  );
}

type Stat = [string, string, boolean?];

function Stats({ rows }: { rows: Stat[] }) {
  return (
    <dl className="pl-[40px] leading-[34px]">
      {rows.map(([k, v, negative]) => (
        <div key={k} className="flex">
          <dt className="w-[180px] font-bold">{k}</dt>
          <dd className="flex"><b className="w-[20px]">:</b><span className={negative ? "text-[#e0101c]" : ""}>{v}</span></dd>
        </div>
      ))}
    </dl>
  );
}

function Debugger() {
  const tabs = ["Backtest", "Debugger", "Result", "Settings"];
  return (
    <section className="relative flex h-[932px] shrink-0 flex-col border-t-2 border-[#8f8d8f]">
      <svg className="absolute -top-[10px] left-[1909px]" width="20" height="16" viewBox="0 0 20 16" stroke="#fff" strokeWidth="3">
        <path d="M0 2h20M0 8h20M0 14h20" />
      </svg>
      <div className="h-[36px] shrink-0 border-b-2 border-[#8f8f8f] bg-black pl-[4px] text-[20px] leading-[26px]">Debugger (2)</div>
      <div className="flex min-h-0 flex-1 bg-[#222]">
        <div className="min-w-0 flex-1 overflow-hidden px-[30px] pt-[19px] text-[24px]">
          <form className="flex gap-5">
            <SelectField label="EA" id="ea" value="DEFAULT" />
            <Field label="Instruments" id="instruments">
              <button id="instruments" type="button" className={`${field} flex items-center justify-center gap-[8px]`}>EUR_USD <Caret className="text-white" /></button>
            </Field>
            <SelectField label="Time frame *" id="frame" value="M1" />
            <DateField label="From" id="from" value="01/01/2017" />
            <DateField label="Until" id="until" value="02/04/2017" />
            <Field label="Starting Equality" id="equality">
              <input id="equality" defaultValue="10000" className={`${field} pl-[25px]`} />
            </Field>
            <SelectField label="Currency" id="currency" value="EUR" />
            <SelectField label="pips **" id="pips" value="1" />
          </form>
          <div className="mt-[28px] flex h-[44px] gap-[65px]">
            <div className="flex-1 rounded-[8px] bg-linear-to-b from-[#808080] to-[#888] to-20%" />
            <button className="h-[48px] w-[95px] rounded-[6px] border-2 border-[#2e6da4] bg-[#337ab7] text-[24px]">Start</button>
          </div>
          <h1 className="mt-[30px] text-[36px] leading-[40px]">General</h1>
          <div className="-mr-[60px] mt-[18px] grid grid-cols-4">
            <Stats rows={[["Started", ""], ["From", "Oct 10th 12:17:32"], ["Until", "Jun 18th 02:04:12"]]} />
            <Stats rows={[["Diff", "0"], ["Nr of trades", "0"]]} />
            <Stats rows={[["Completed in", "4 s"], ["Fetching", "476 ms"], ["Testing", "4 s"]]} />
            <Stats rows={[["Ticks", "12,044"], ["Ticks p / s", "3,607"]]} />
          </div>
          <hr className="mt-[41px] border-t-2 border-[#eee]" />
          <div className="mt-[40px] flex pr-[31px]">
            <div className="w-[968px] shrink-0 pl-[30px] pt-[18px]">
              <h2 className="mb-[17px] text-[28px] leading-[34px]">EUR_USD</h2>
              <Stats rows={[["Diff", "-0.0006", true], ["Equality", "9999.9994"], ["Nr of trades", "5"]]} />
              <div className="leading-[34px] text-[#444]">\</div>
              <Stats rows={[["Completed in", "4 s"], ["Fetching", ""], ["Testing", ""], ["Time frame", "M1"], ["Ticks", "12,044"], ["Ticks p / s", "3,607"]]} />
            </div>
            <div className="min-w-0 flex-1"><EqualityChart /></div>
          </div>
        </div>
        <div className="flex w-[30px] shrink-0 flex-col items-center bg-[#f1f1f1] py-[10px]">
          <ArrowUp color="#a3a3a3" />
          <div className="mt-[12px] h-[750px] w-[26px] bg-[#c1c1c1]" />
          <div className="mt-auto"><ArrowDown /></div>
        </div>
      </div>
      <nav className="flex h-[40px] shrink-0 items-stretch border-y-2 border-[#8f8f8f] bg-black text-[24px]">
        {tabs.map((t) => (
          <button key={t} className={t === "Backtest" ? "border-r-2 border-[#999] bg-[#895f44] px-[30px]" : "border-r-2 border-[#999] px-[30px]"}>{t}</button>
        ))}
      </nav>
    </section>
  );
}

export default function App() {
  return (
    <div className="flex h-screen flex-col overflow-hidden bg-black font-['Liberation_Sans',Arial,sans-serif] text-white">
      <Browser />
      <div className="flex h-[42px] shrink-0 items-start border-b-2 border-[#c0c0c0] bg-black">
        <button aria-label="Add" className="flex h-[38px] w-[60px] items-center justify-center rounded-[8px] bg-linear-to-b from-[#5a5a5a] to-black">
          <svg width="22" height="22" viewBox="0 0 22 22" stroke="#fff" strokeWidth="6"><path d="M11 0v22M0 11h22" /></svg>
        </button>
        <button aria-label="Code" className="ml-[10px] flex h-[38px] w-[60px] items-center justify-center rounded-[8px] bg-linear-to-b from-[#5a5a5a] to-black">
          <svg width="30" height="22" viewBox="0 0 30 22" fill="none" stroke="#fff" strokeWidth="2.500"><path d="M8 4L2 11l6 7M22 4l6 7-6 7M18 1l-6 20" /></svg>
        </button>
        <button className="ml-auto flex h-[38px] items-center gap-[12px] pr-[29px] text-[24px]">Config <Caret /></button>
      </div>
      <div className="flex min-h-0 flex-1">
        <Sidebar />
        <Workspace />
      </div>
      <Debugger />
      <footer className="flex h-[23px] shrink-0 items-center justify-end bg-black text-[18px] leading-none">
        <span className="mr-[61px]">Workers 1 / 8</span>
        <a href="#login" className="underline">You are offline, please login</a>
        <span className="ml-[10px] mr-[21px] h-[16px] w-[16px] rounded-full bg-[#8b0000]" />
      </footer>
    </div>
  );
}
